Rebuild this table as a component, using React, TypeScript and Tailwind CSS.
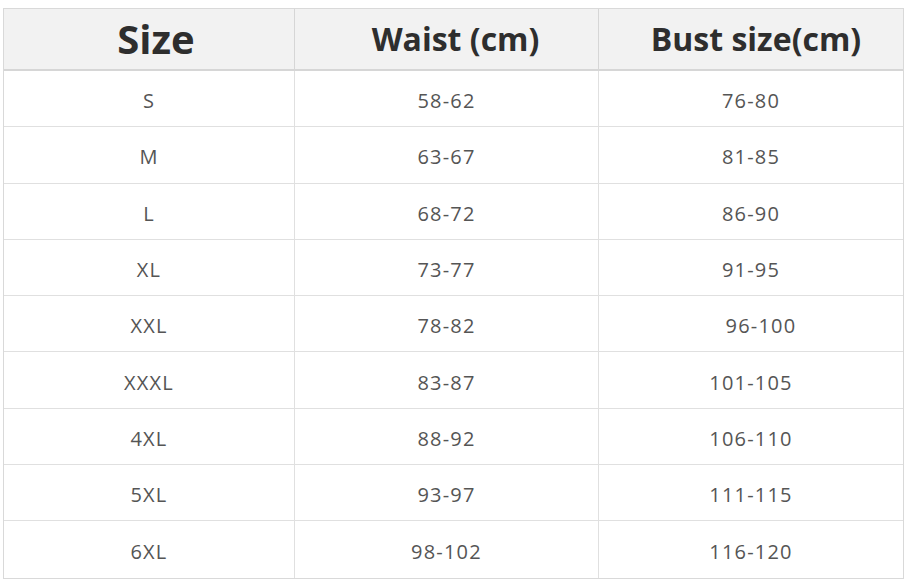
import React from 'react';

const rows: [string, string, string][] = [
  ['S', '58-62', '76-80'],
  ['M', '63-67', '81-85'],
  ['L', '68-72', '86-90'],
  ['XL', '73-77', '91-95'],
  ['XXL', '78-82', '96-100'],
  ['XXXL', '83-87', '101-105'],
  ['4XL', '88-92', '106-110'],
  ['5XL', '93-97', '111-115'],
  ['6XL', '98-102', '116-120'],
];

const cell = 'h-[56.3px] flex items-center justify-center pt-[5px] border-[#e0e0e0] text-[20px] tracking-[1.2px] text-[#555]';

const App: React.FC = () => {
  return (
    <div
      className="w-[908px] h-[585px] bg-white pt-[8px] pl-[3px]"
      style={{ fontFamily: '"Open Sans", "Noto Sans", sans-serif' }}
    >
      <div className="w-[901px] border border-[#d9d9d9] grid grid-cols-[291px_304px_304px]">
        <div className="h-[62px] bg-[#f2f2f2] border-b-2 border-r border-[#d6d6d6] flex items-center justify-center pl-[14px] text-[40px] font-bold text-[#2e2e2e]">
          Size
        </div>
        <div className="h-[62px] bg-[#f2f2f2] border-b-2 border-r border-[#d6d6d6] flex items-center justify-center pl-[18px] text-[32px] font-bold text-[#2e2e2e]">
          Waist (cm)
        </div>
        <div className="h-[62px] bg-[#f2f2f2] border-b-2 border-[#d6d6d6] flex items-center justify-center pl-[10px] text-[32px] font-bold text-[#2e2e2e]">
          Bust size(cm)
        </div>
        {rows.map((r, i) => (
          <React.Fragment key={r[0]}>
            <div className={`${cell} border-r ${i < rows.length - 1 ? 'border-b' : ''}`}>{r[0]}</div>
            <div className={`${cell} border-r ${i < rows.length - 1 ? 'border-b' : ''}`}>{r[1]}</div>
            <div className={`${cell} ${r[2] === '96-100' ? 'pl-[20px]' : ''} ${i < rows.length - 1 ? 'border-b' : ''}`}>{r[2]}</div>
          </React.Fragment>
        ))}
      </div>
    </div>
  );
};

export default App;
